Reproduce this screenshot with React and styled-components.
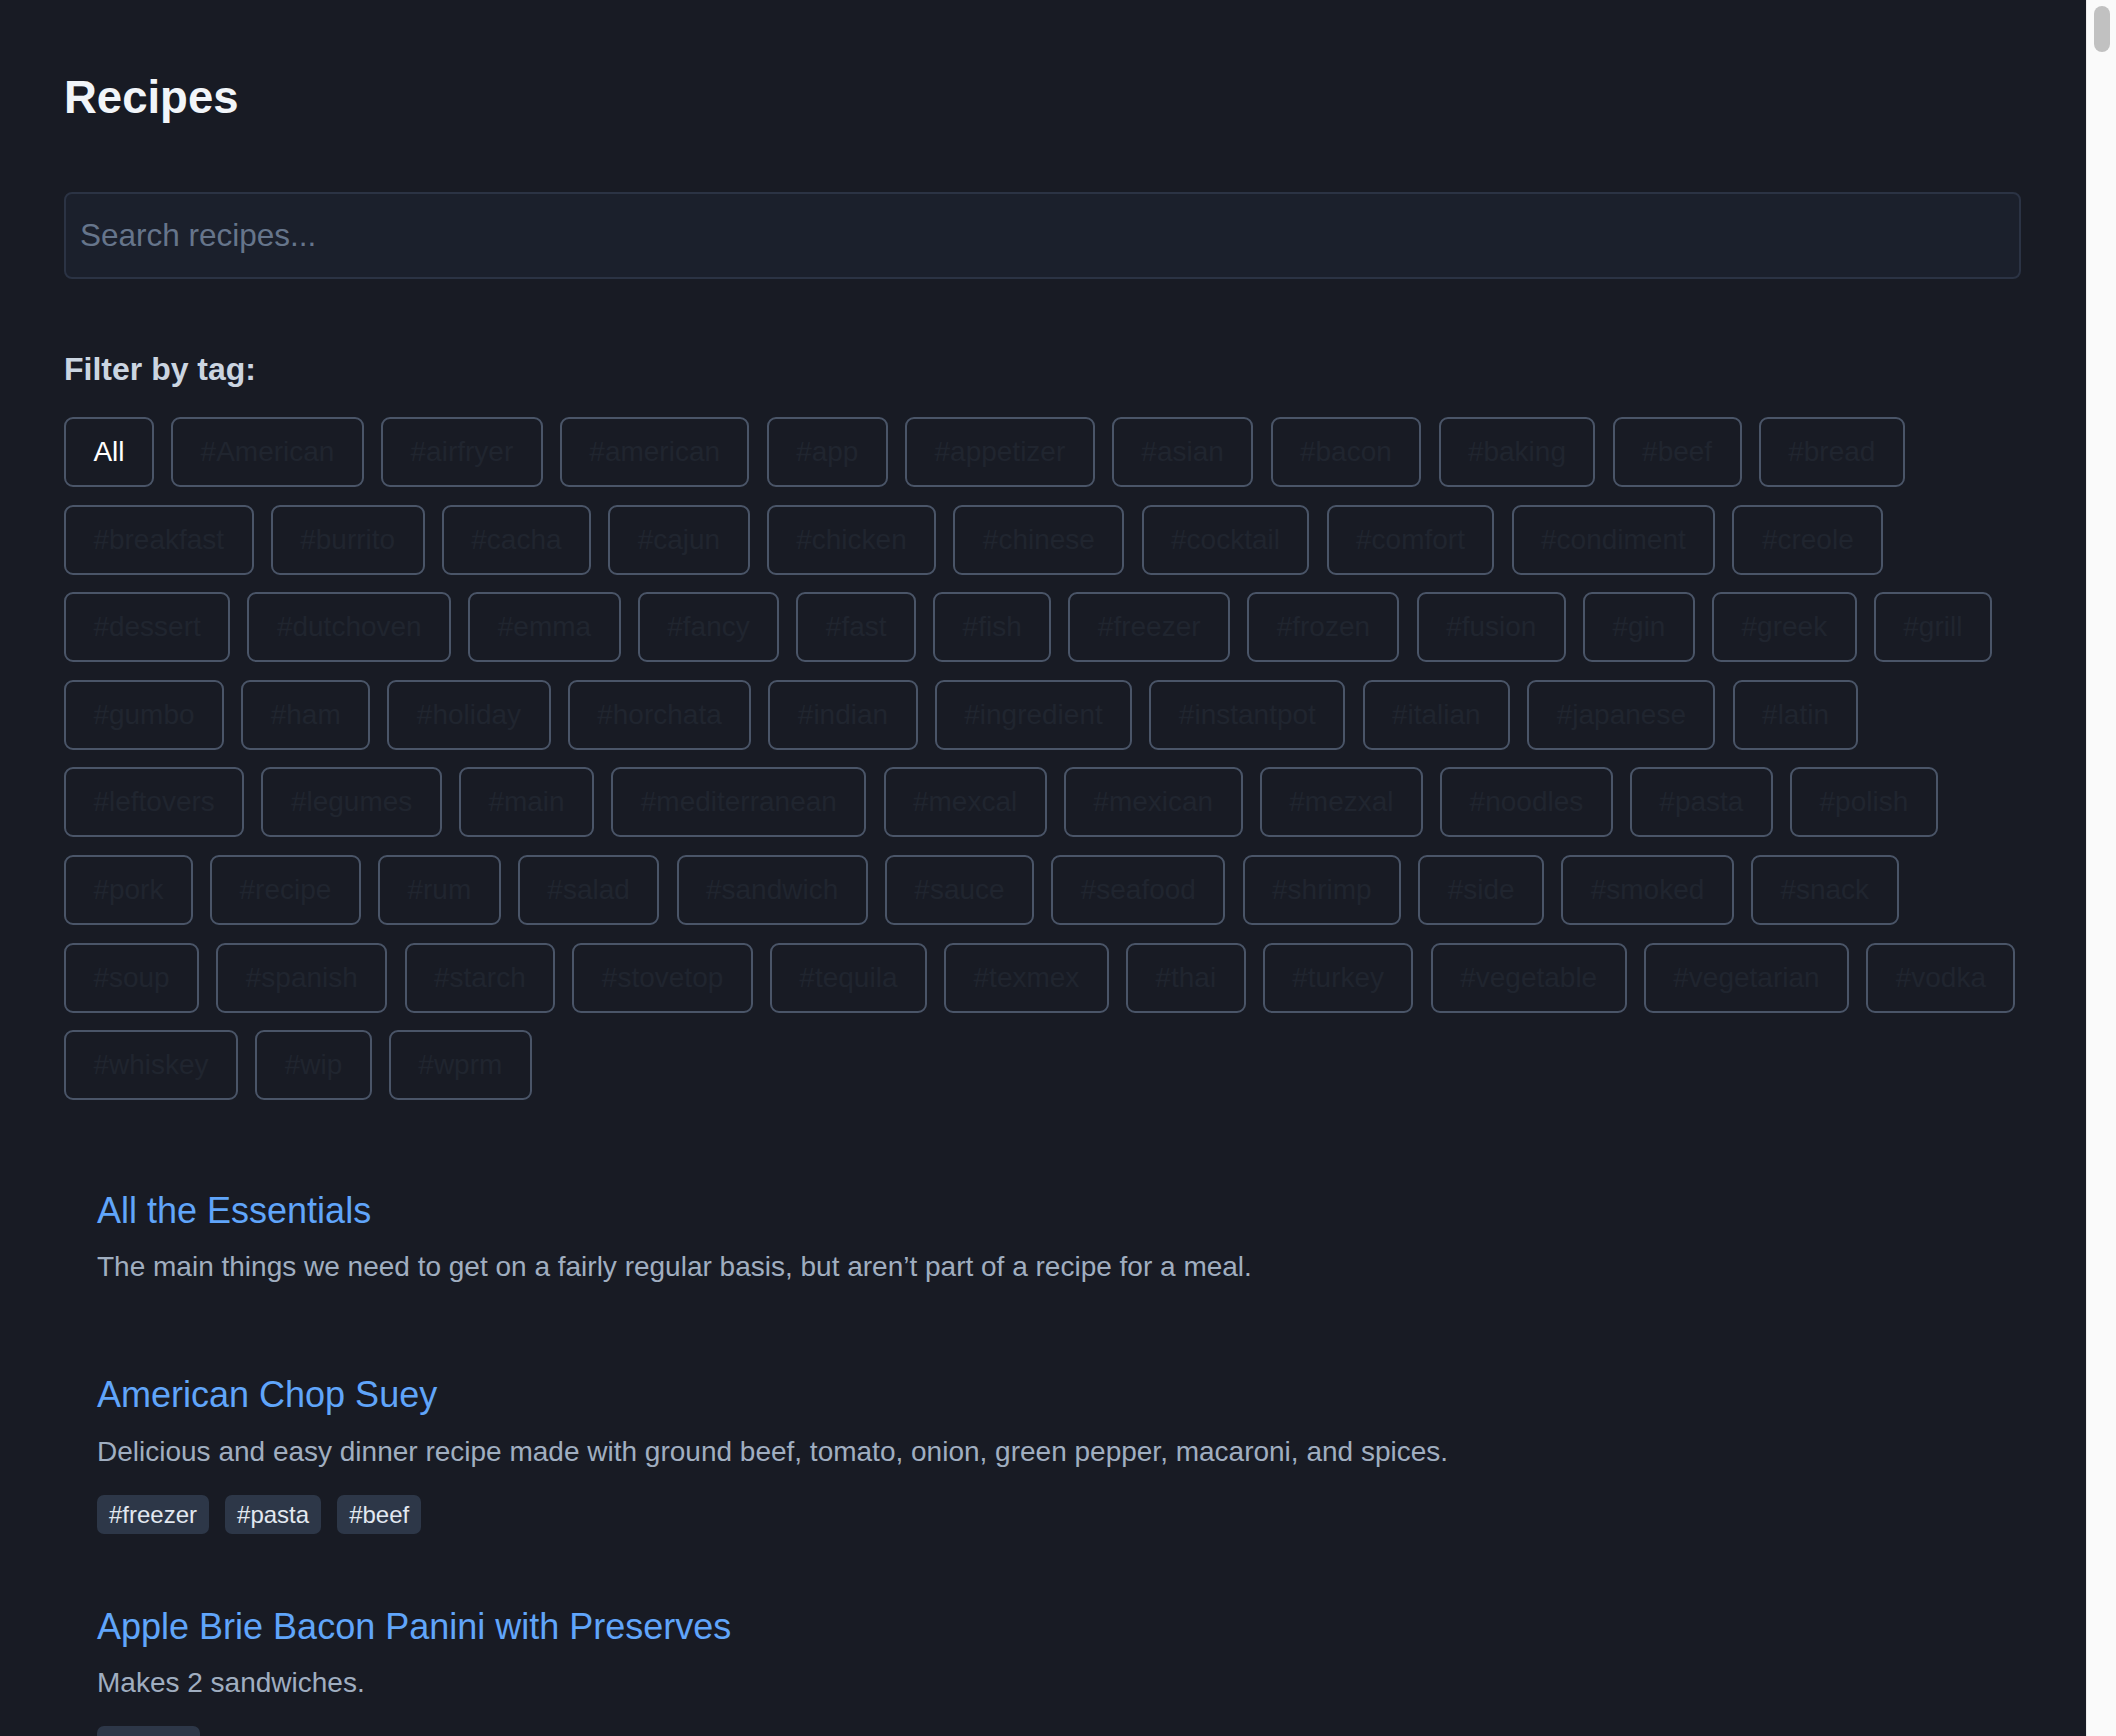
import React, { useState } from 'react';
import styled, { createGlobalStyle } from 'styled-components';

const GlobalStyle = createGlobalStyle`
  html, body {
    margin: 0;
    padding: 0;
    height: 100%;
    overflow: hidden;
    background: #181b24;
  }
  body {
    font-family: "Liberation Sans", Arial, Helvetica, sans-serif;
  }
  * {
    box-sizing: border-box;
  }
`;

const Shell = styled.div`
  display: flex;
  height: 100vh;
`;

const Main = styled.main`
  flex: 1;
  min-width: 0;
  overflow: hidden;
  padding: 70px 65px 0 64px;
  background: #181b24;
`;

// fake window scrollbar on the right edge
const ScrollTrack = styled.div`
  width: 30px;
  flex-shrink: 0;
  background: #fafafa;
  border-left: 1px solid #ececec;
  padding: 6px 0 0 7px;
`;

const ScrollThumb = styled.div`
  width: 16px;
  height: 46px;
  border-radius: 8px;
  background: #c1c1c1;
`;

const Title = styled.h1`
  margin: 0;
  font-size: 45.5px;
  line-height: 56px;
  font-weight: 700;
  color: #f1f5f9;
`;

const SearchInput = styled.input`
  display: block;
  width: 100%;
  height: 87px;
  margin-top: 66px;
  padding: 0 14px;
  border: 2px solid #2b3344;
  border-radius: 8px;
  background: #1b202c;
  color: #e2e8f0;
  font-family: inherit;
  font-size: 31.5px;
  outline: none;
  &::placeholder {
    color: #66758b;
  }
`;

const FilterLabel = styled.h2`
  margin: 72px 0 0;
  font-size: 32px;
  line-height: 36px;
  font-weight: 700;
  color: #cbd5e1;
`;

const TagCloud = styled.div`
  display: flex;
  flex-wrap: wrap;
  row-gap: 17.6px;
  column-gap: 17.3px;
  margin-top: 30px;
`;

const TagButton = styled.button`
  height: 70px;
  padding: 0 27.4px;
  border: 2px solid #4a5568;
  border-radius: 9px;
  background: transparent;
  color: ${(p) => (p.$active ? '#ffffff' : '#20252f')};
  font-family: inherit;
  font-size: 28px;
  line-height: 66px;
  white-space: nowrap;
  cursor: pointer;
`;

const RecipeList = styled.div`
  display: flex;
  flex-direction: column;
  gap: 70px;
  margin-top: 88px;
  padding-left: 33px;
`;

const RecipeItem = styled.article`
  display: flex;
  flex-direction: column;
  align-items: flex-start;
`;

const RecipeTitle = styled.a`
  font-size: 36px;
  line-height: 45px;
  color: #60a5fa;
  text-decoration: none;
  cursor: pointer;
`;

const RecipeDesc = styled.p`
  margin: 14.3px 0 15px;
  font-size: 28px;
  line-height: 40px;
  color: #a0aec0;
`;

const ChipRow = styled.div`
  display: flex;
  gap: 16px;
  margin-top: 8px;
`;

const Chip = styled.span`
  padding: 5px 12px;
  border-radius: 7px;
  background: #2d3748;
  color: #e2e8f0;
  font-size: 24px;
  line-height: 29px;
`;

const TAGS = [
  'American', 'airfryer', 'american', 'app', 'appetizer', 'asian', 'bacon', 'baking', 'beef', 'bread',
  'breakfast', 'burrito', 'cacha', 'cajun', 'chicken', 'chinese', 'cocktail', 'comfort', 'condiment', 'creole',
  'dessert', 'dutchoven', 'emma', 'fancy', 'fast', 'fish', 'freezer', 'frozen', 'fusion', 'gin', 'greek', 'grill',
  'gumbo', 'ham', 'holiday', 'horchata', 'indian', 'ingredient', 'instantpot', 'italian', 'japanese', 'latin',
  'leftovers', 'legumes', 'main', 'mediterranean', 'mexcal', 'mexican', 'mezxal', 'noodles', 'pasta', 'polish',
  'pork', 'recipe', 'rum', 'salad', 'sandwich', 'sauce', 'seafood', 'shrimp', 'side', 'smoked', 'snack',
  'soup', 'spanish', 'starch', 'stovetop', 'tequila', 'texmex', 'thai', 'turkey', 'vegetable', 'vegetarian', 'vodka',
  'whiskey', 'wip', 'wprm',
];

const RECIPES = [
  {
    title: 'All the Essentials',
    desc: 'The main things we need to get on a fairly regular basis, but aren\u2019t part of a recipe for a meal.',
    tags: [],
  },
  {
    title: 'American Chop Suey',
    desc: 'Delicious and easy dinner recipe made with ground beef, tomato, onion, green pepper, macaroni, and spices.',
    tags: ['freezer', 'pasta', 'beef'],
  },
  {
    title: 'Apple Brie Bacon Panini with Preserves',
    desc: 'Makes 2 sandwiches.',
    tags: ['bacon'],
  },
];

const App = () => {
  const [query, setQuery] = useState('');
  const [activeTag, setActiveTag] = useState(null);

  const visible = RECIPES.filter((r) => {
    const q = query.toLowerCase();
    const matchText = !q || r.title.toLowerCase().includes(q) || r.desc.toLowerCase().includes(q);
    const matchTag = !activeTag || r.tags.includes(activeTag);
    return matchText && matchTag;
  });

  return (
    <>
      <GlobalStyle />
      <Shell>
        <Main>
          <Title>Recipes</Title>
          <SearchInput
            type="text"
            value={query}
            onChange={(e) => setQuery(e.target.value)}
            placeholder="Search recipes..."
          />
          <FilterLabel>Filter by tag:</FilterLabel>
          <TagCloud>
            <TagButton $active={activeTag === null} onClick={() => setActiveTag(null)}>
              All
            </TagButton>
            {TAGS.map((tag) => (
              <TagButton key={tag} $active={activeTag === tag} onClick={() => setActiveTag(tag)}>
                #{tag}
              </TagButton>
            ))}
          </TagCloud>
          <RecipeList>
            {visible.map((r) => (
              <RecipeItem key={r.title}>
                <RecipeTitle>{r.title}</RecipeTitle>
                <RecipeDesc>{r.desc}</RecipeDesc>
                {r.tags.length > 0 && (
                  <ChipRow>
                    {r.tags.map((t) => (
                      <Chip key={t}>#{t}</Chip>
                    ))}
                  </ChipRow>
                )}
              </RecipeItem>
            ))}
          </RecipeList>
        </Main>
        <ScrollTrack>
          <ScrollThumb />
        </ScrollTrack>
      </Shell>
    </>
  );
};

export default App;
